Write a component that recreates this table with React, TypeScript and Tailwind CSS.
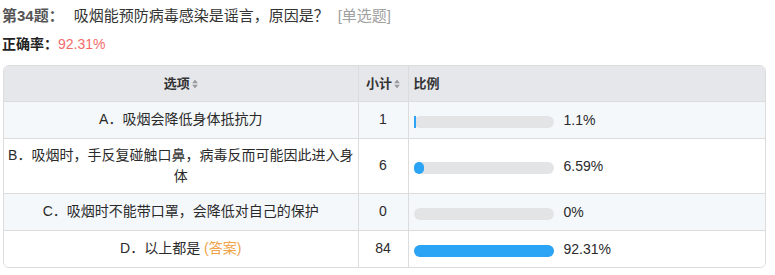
const rows = [
  { label: "A．吸烟会降低身体抵抗力", count: 1, pct: 1.1, text: "1.1%", striped: true },
  { label: "B．吸烟时，手反复碰触口鼻，病毒反而可能因此进入身体", count: 6, pct: 6.59, text: "6.59%", striped: false },
  { label: "C．吸烟时不能带口罩，会降低对自己的保护", count: 0, pct: 0, text: "0%", striped: true },
  { label: "D．以上都是", count: 84, pct: 92.31, text: "92.31%", striped: false, answer: true },
];

const maxPct = Math.max(...rows.map((r) => r.pct));

const SortIcon = () => (
  <svg width="6" height="10" viewBox="0 0 6 10" className="inline-block ml-[2px] align-[-1px]">
    <path d="M3 0.5 L5.8 4.2 H0.2 Z" fill="#9a9a9a" />
    <path d="M3 9.5 L5.8 5.8 H0.2 Z" fill="#9a9a9a" />
  </svg>
);

export default function App() {
  return (
    <div
      className="w-[775px] h-[275px] bg-white text-[#333] pl-[2px] pt-[5px]"
      style={{ fontFamily: '"Liberation Sans", "Noto Sans CJK SC", sans-serif' }}
    >
      <div className="flex items-center h-[22px] text-[15px] leading-[22px]">
        <span className="font-bold text-[#555]">第34题：</span>
        <span className="ml-[10px]">吸烟能预防病毒感染是谣言，原因是？</span>
        <span className="ml-[9px] text-[#a0a0a0]">[单选题]</span>
      </div>
      <div className="flex items-center h-[22px] mt-[6px] text-[14px] leading-[22px]">
        <span className="font-bold text-[#222]">正确率：</span>
        <span className="text-[#f26b6b]">92.31%</span>
      </div>
      <div className="mt-[10px] w-[763px] ml-[1px] border border-[#dcdcdc] rounded-[6px] overflow-hidden">
        <table className="w-full border-collapse text-[14px] leading-[21px]">
          <thead>
            <tr className="bg-[#e6e7eb] h-[35px]">
              <th className="w-[354px] font-bold text-center text-[13px] text-[#333]">
                选项
                <SortIcon />
              </th>
              <th className="w-[50px] border-l border-[#dcdcdc] font-bold text-center text-[13px] text-[#333] px-0">
                小计
                <SortIcon />
              </th>
              <th className="border-l border-[#dcdcdc] font-bold text-left text-[13px] text-[#333] pl-[5px]">比例</th>
            </tr>
          </thead>
          <tbody>
            {rows.map((r, i) => {
              const w = r.pct === 0 ? 0 : Math.max(Math.round((r.pct / maxPct) * 140), 2);
              return (
                <tr
                  key={i}
                  className={`border-t border-[#dcdcdc] ${r.striped ? "bg-[#f4f8fb]" : "bg-white"} ${
                    i === 1 ? "h-[55px]" : "h-[37px]"
                  }`}
                >
                  <td className="px-[4px] text-center align-middle text-[#2a2a2a]">
                    {r.label}
                    {r.answer && <span className="text-[#f0a248]"> (答案)</span>}
                  </td>
                  <td className="border-l border-[#dcdcdc] text-center align-middle text-[#2a2a2a]">{r.count}</td>
                  <td className="border-l border-[#dcdcdc] pl-[5px] align-middle">
                    <div className="flex items-center pt-[4px]">
                      <div className="w-[140px] h-[12px] rounded-full bg-[#e3e4e6]">
                        <div
                          className={`h-full bg-[#2ba4f6] ${w > 4 ? "rounded-full" : ""}`}
                          style={{ width: w }}
                        />
                      </div>
                      <span className="ml-[10px] mt-[-2px] text-[#2a2a2a]">{r.text}</span>
                    </div>
                  </td>
                </tr>
              );
            })}
          </tbody>
        </table>
      </div>
    </div>
  );
}
